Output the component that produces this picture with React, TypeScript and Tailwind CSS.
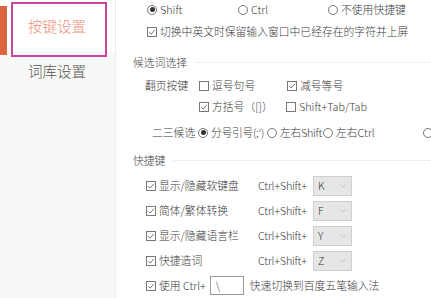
import { ChevronDown } from "lucide-react";

const font = { fontFamily: '"Noto Sans CJK SC", "Noto Sans", sans-serif' };

function Radio({ checked, label }: { checked?: boolean; label: string }) {
  return (
    <span className="flex items-center gap-[3px] whitespace-nowrap">
      <span className="flex h-[10px] w-[10px] shrink-0 items-center justify-center rounded-full border border-[#777] bg-white">
        {checked ? <span className="h-[5px] w-[5px] rounded-full bg-[#333]" /> : null}
      </span>
      {label}
    </span>
  );
}

function Check({ checked, label }: { checked?: boolean; label: string }) {
  return (
    <span className="flex items-center gap-[3px] whitespace-nowrap">
      <span className="flex h-[10px] w-[10px] shrink-0 items-center justify-center border border-[#777] bg-white">
        {checked ? (
          <svg viewBox="0 0 10 10" className="h-[8px] w-[8px]">
            <path d="M1.5 5.2 L4 7.6 L8.6 2.2" fill="none" stroke="#555" strokeWidth="1" />
          </svg>
        ) : null}
      </span>
      {label}
    </span>
  );
}

function KeySelect({ value }: { value: string }) {
  return (
    <div className="flex h-[20px] w-[39px] shrink-0 items-center justify-between border border-[#cfcfcf] bg-[#e6e6e6] pl-[4px] pr-[3px] text-[10.5px] text-[#333]">
      <span>{value}</span>
      <ChevronDown size={10} strokeWidth={1.5} className="text-[#aaa]" />
    </div>
  );
}

function Header({ title }: { title: string }) {
  return (
    <div className="flex h-[20px] items-center pl-[17px]">
      <span className="text-[#444]">{title}</span>
      <span className="ml-[8px] h-px flex-1 bg-[#efefef]" />
    </div>
  );
}

const shortcuts = [
  { label: "显示/隐藏软键盘", key: "K" },
  { label: "简体/繁体转换", key: "F" },
  { label: "显示/隐藏语言栏", key: "Y" },
  { label: "快捷造词", key: "Z" },
];

export default function App() {
  return (
    <div className="relative flex h-[298px] w-[431px] overflow-hidden bg-white font-light" style={font}>
      <aside className="flex w-[116px] shrink-0 flex-col border-r border-[#ededed] bg-[#f8f8f6]">
        <div className="flex h-[52px] items-center bg-white">
          <span className="mt-[6px] h-[49px] w-[7px] self-start bg-[#da6440]" />
          <span className="ml-[21px] text-[14.5px] text-[#ec907a]">按键设置</span>
        </div>
        <div className="flex h-[38px] items-center pl-[28px] text-[14.5px] text-[#555]">词库设置</div>
      </aside>

      <div className="pointer-events-none absolute left-[11px] top-[2px] h-[55px] w-[96px] border-[2.5px] border-[#c8469f]" />

      <main className="flex min-w-0 flex-1 flex-col text-[10.8px] text-[#3a3a3a]">
        <div className="flex h-[20px] items-center pl-[31px]">
          <span className="w-[91px] shrink-0">
            <Radio checked label="Shift" />
          </span>
          <span className="w-[90px] shrink-0">
            <Radio label="Ctrl" />
          </span>
          <Radio label="不使用快捷键" />
        </div>
        <div className="mt-[3px] flex h-[20px] items-center pl-[31px]">
          <Check checked label="切换中英文时保留输入窗口中已经存在的字符并上屏" />
        </div>

        <div className="mt-[11px]">
          <Header title="候选词选择" />
        </div>
        <div className="mt-[4px] flex h-[20px] items-center pl-[29px]">
          <span className="w-[54px] shrink-0">翻页按键</span>
          <span className="w-[88px] shrink-0">
            <Check label="逗号句号" />
          </span>
          <Check checked label="减号等号" />
        </div>
        <div className="mt-[2px] flex h-[20px] items-center pl-[83px]">
          <span className="w-[87px] shrink-0">
            <Check checked label="方括号（[]）" />
          </span>
          <Check label="Shift+Tab/Tab" />
        </div>
        <div className="mt-[7px] flex h-[20px] items-center pl-[36px]">
          <span className="w-[46px] shrink-0">二三候选</span>
          <span className="w-[69px] shrink-0 tracking-[-0.3px]">
            <Radio checked label="分号引号(;')" />
          </span>
          <span className="w-[56px] shrink-0 tracking-[-0.3px]">
            <Radio label="左右Shift" />
          </span>
          <span className="w-[100px] shrink-0">
            <Radio label="左右Ctrl" />
          </span>
          <span className="shrink-0">
            <Radio label="" />
          </span>
        </div>

        <div className="mt-[8px]">
          <Header title="快捷键" />
        </div>
        <div className="mt-[3px] flex flex-col">
          {shortcuts.map((s) => (
            <div key={s.key} className="flex h-[25px] items-center pl-[30px]">
              <span className="w-[112px] shrink-0">
                <Check checked label={s.label} />
              </span>
              <span className="w-[55px] shrink-0 tracking-[-0.2px]">Ctrl+Shift+</span>
              <KeySelect value={s.key} />
            </div>
          ))}
          <div className="flex h-[25px] items-center pl-[30px]">
            <Check checked label="使用 Ctrl+" />
            <div className="ml-[4px] flex h-[19px] w-[34px] shrink-0 items-center border border-[#9a9a9a] bg-white pl-[5px]">\</div>
            <span className="ml-[6px]">快速切换到百度五笔输入法</span>
          </div>
        </div>
      </main>
    </div>
  );
}
